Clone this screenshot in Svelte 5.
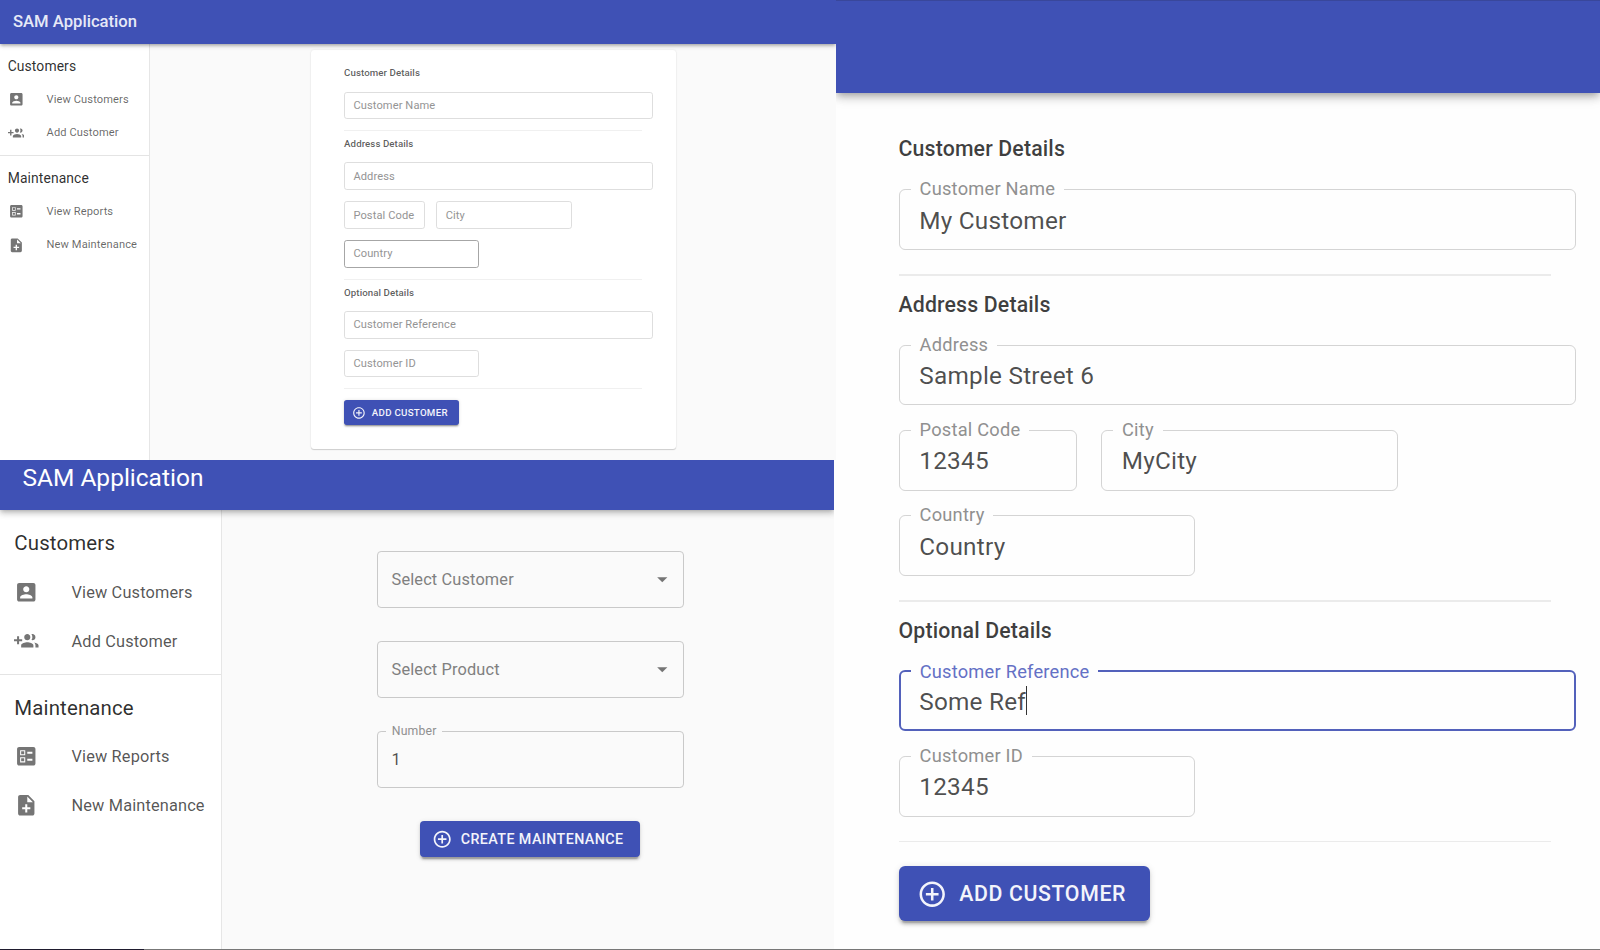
<script>
  const icons = {
    account: 'M3 5v14c0 1.1.89 2 2 2h14c1.1 0 2-.9 2-2V5c0-1.1-.9-2-2-2H5c-1.11 0-2 .9-2 2zm12 4c0 1.66-1.34 3-3 3s-3-1.34-3-3 1.34-3 3-3 3 1.34 3 3zm-9 8c0-2 4-3.1 6-3.1s6 1.1 6 3.1v1H6v-1z',
    groupAdd: 'M8 10H5V7H3v3H0v2h3v3h2v-3h3v-2zm10 1c1.66 0 2.99-1.34 2.99-3S19.66 5 18 5c-.32 0-.63.05-.91.14.57.81.9 1.79.9 2.86s-.34 2.04-.9 2.86c.28.09.59.14.91.14zm-5 0c1.66 0 2.99-1.34 2.99-3S14.66 5 13 5c-1.66 0-3 1.34-3 3s1.34 3 3 3zm6.62 2.16c.83.73 1.38 1.66 1.38 2.84v2h3v-2c0-1.54-2.37-2.49-4.38-2.84zM13 13c-2 0-6 1-6 3v2h12v-2c0-2-4-3-6-3z',
    ballot: 'M13 9.5h5v-2h-5v2zm0 7h5v-2h-5v2zm6 4.5H5c-1.1 0-2-.9-2-2V5c0-1.1.9-2 2-2h14c1.1 0 2 .9 2 2v14c0 1.1-.9 2-2 2zM6 11h5V6H6v5zm1-4h3v3H7V7zM6 18h5v-5H6v5zm1-4h3v3H7v-3z',
    noteAdd: 'M14 2H6c-1.1 0-1.99.9-1.99 2L4 20c0 1.1.89 2 1.99 2H18c1.1 0 2-.9 2-2V8l-6-6zm2 14h-3v3h-2v-3H8v-2h3v-3h2v3h3v2zm-3-7V3.5L18.5 9H13z',
    addCircle: 'M13 7h-2v4H7v2h4v4h2v-4h4v-2h-4V7zm-1-5C6.48 2 2 6.48 2 12s4.48 10 10 10 10-4.48 10-10S17.52 2 12 2zm0 18c-4.41 0-8-3.59-8-8s3.59-8 8-8 8 3.59 8 8-3.59 8-8 8z',
    arrow: 'M7 10l5 5 5-5z'
  };

  const menu = [
    { title: 'Customers', items: [['account', 'View Customers'], ['groupAdd', 'Add Customer']] },
    { title: 'Maintenance', items: [['ballot', 'View Reports'], ['noteAdd', 'New Maintenance']] }
  ];

  const sections = [
    { title: 'Customer Details', rows: [[['name', 'Customer Name', 'full']]] },
    {
      title: 'Address Details',
      rows: [
        [['address', 'Address', 'full']],
        [['postal', 'Postal Code', 'short'], ['city', 'City', 'half']],
        [['country', 'Country', 'half']]
      ]
    },
    {
      title: 'Optional Details',
      rows: [[['reference', 'Customer Reference', 'full']], [['id', 'Customer ID', 'half']]]
    }
  ];

  const filled = {
    name: 'My Customer',
    address: 'Sample Street 6',
    postal: '12345',
    city: 'MyCity',
    country: 'Country',
    reference: 'Some Ref',
    id: '12345'
  };
</script>

{#snippet icon(name)}
  <svg class="icon" viewBox="0 0 24 24" aria-hidden="true"><path d={icons[name]} /></svg>
{/snippet}

{#snippet sidebar()}
  <nav class="sidebar">
    {#each menu as group}
      <div class="group">
        <h2>{group.title}</h2>
        {#each group.items as [glyph, label]}
          <div class="item">{@render icon(glyph)}<span>{label}</span></div>
        {/each}
      </div>
    {/each}
  </nav>
{/snippet}

{#snippet customerForm(values, active, hovered)}
  <div class="form">
    {#each sections as section}
      <h3>{section.title}</h3>
      <div class="rows">
        {#each section.rows as row}
          <div class="row">
            {#each row as [key, label, size]}
              <div class="field {size}" class:focused={key === active} class:hovered={key === hovered}>
                {#if values[key]}
                  <span class="label">{label}</span>
                  <span class="value">{values[key]}</span>
                  {#if key === active}<i class="caret"></i>{/if}
                {:else}
                  <span class="placeholder">{label}</span>
                {/if}
              </div>
            {/each}
          </div>
        {/each}
      </div>
      <div class="divider"></div>
    {/each}
    <button>{@render icon('addCircle')}<span>ADD CUSTOMER</span></button>
  </div>
{/snippet}

<div class="board">
  <div class="left">
    <section class="app overview">
      <header><h1>SAM Application</h1></header>
      <div class="body">
        {@render sidebar()}
        <main>
          <div class="card">{@render customerForm({}, '', 'country')}</div>
        </main>
      </div>
    </section>

    <section class="app maintenance">
      <header><h1>SAM Application</h1></header>
      <div class="body">
        {@render sidebar()}
        <main>
          <div class="field select"><span class="placeholder">Select Customer</span>{@render icon('arrow')}</div>
          <div class="field select"><span class="placeholder">Select Product</span>{@render icon('arrow')}</div>
          <div class="field"><span class="label">Number</span><span class="value">1</span></div>
          <button>{@render icon('addCircle')}<span>CREATE MAINTENANCE</span></button>
        </main>
      </div>
    </section>
  </div>

  <section class="app detail">
    <header></header>
    <main>{@render customerForm(filled, 'reference', '')}</main>
  </section>
  <div class="edge"></div>
</div>

<style>
  :global(body) {
    margin: 0;
    background: #fff;
  }

  .board {
    position: relative;
    display: flex;
    width: 1600px;
    height: 950px;
    overflow: hidden;
    background: #fefefe;
    font-family: Roboto, 'Liberation Sans', sans-serif;
    color: rgba(0, 0, 0, 0.83);
  }
  .board :global(*) {
    box-sizing: border-box;
  }
  .edge {
    position: absolute;
    left: 0;
    right: 0;
    bottom: 0;
    height: 1px;
    background: linear-gradient(90deg, #1f1b2e 144px, #777 144px);
  }

  .left {
    display: flex;
    flex-direction: column;
    width: 836px;
    flex: none;
  }
  .app {
    display: flex;
    flex-direction: column;
    overflow: hidden;
  }
  .overview {
    --u: 0.694px;
    --cut: 2.9;
    --surface: #fff;
    height: 460px;
    flex: none;
  }
  .maintenance {
    --u: 1.0215px;
    --cut: 0;
    --surface: #fafafa;
    width: 834px;
    flex: 1;
  }
  .detail {
    --u: 1.522px;
    --surface: #fefefe;
    flex: 1;
    background: #fefefe;
  }

  header {
    position: relative;
    z-index: 1;
    display: flex;
    align-items: center;
    flex: none;
    background: #3f51b5;
    color: #fff;
    box-shadow:
      0 calc(2 * var(--u)) calc(4 * var(--u)) calc(-1 * var(--u)) rgba(0, 0, 0, 0.2),
      0 calc(4 * var(--u)) calc(5 * var(--u)) rgba(0, 0, 0, 0.14),
      0 calc(1 * var(--u)) calc(10 * var(--u)) rgba(0, 0, 0, 0.12);
  }
  .overview header {
    height: 43.5px;
    padding-left: 13px;
  }
  .maintenance header {
    height: 50.4px;
    padding: 0 0 14px 22.4px;
  }
  .detail header {
    height: 92.7px;
    border-top: 1px solid #39479b;
  }
  h1 {
    margin: 0;
    font-size: calc(24 * var(--u));
    font-weight: 400;
    line-height: 1.33;
  }
  .overview h1 {
    font-weight: 500;
    color: #e6e9f7;
  }

  .body {
    display: flex;
    flex: 1;
    min-height: 0;
    background: #fafafa;
  }
  .sidebar {
    flex: none;
    background: #fff;
    border-right: 1px solid #e6e6e6;
  }
  .overview .sidebar {
    width: 149.5px;
    padding-top: 0.7px;
  }
  .maintenance .sidebar {
    width: 222px;
  }
  .group {
    padding: calc(8 * var(--u)) 0;
  }
  .group + .group {
    border-top: 1px solid #e4e4e4;
  }
  h2 {
    display: flex;
    align-items: center;
    height: calc(48 * var(--u));
    margin: 0;
    padding-left: calc((14 - var(--cut)) * var(--u));
    font-size: calc(20 * var(--u));
    font-weight: 400;
    letter-spacing: 0.0075em;
  }
  .item {
    display: flex;
    align-items: center;
    gap: calc(32 * var(--u));
    height: calc(48 * var(--u));
    padding-left: calc((14 - var(--cut)) * var(--u));
    font-size: calc(16 * var(--u));
    letter-spacing: 0.00938em;
    color: rgba(0, 0, 0, 0.68);
    white-space: nowrap;
  }
  .overview .item {
    color: rgba(0, 0, 0, 0.6);
  }
  .icon {
    flex: none;
    width: calc(24 * var(--u));
    height: calc(24 * var(--u));
    fill: #757575;
  }

  main {
    display: flex;
    flex-direction: column;
    flex: 1;
  }
  .overview main {
    padding: 6.5px 0 0 161.3px;
  }
  .card {
    width: 364.8px;
    height: 398.5px;
    padding: 14.5px 0 0 33.3px;
    border-radius: 3px;
    background: #fff;
    box-shadow:
      0 1px 1px rgba(0, 0, 0, 0.16),
      0 0 2px rgba(0, 0, 0, 0.1);
  }
  .detail main {
    padding: 37px 0 0 62.5px;
  }
  .maintenance main {
    padding: 40.6px 0 0 155.3px;
    gap: calc(32 * var(--u));
  }

  h3 {
    display: flex;
    align-items: center;
    height: calc(24 * var(--u));
    margin: 0 0 calc(15 * var(--u));
    font-size: calc(14 * var(--u));
    font-weight: 500;
    letter-spacing: 0.00714em;
    color: rgba(0, 0, 0, 0.76);
  }
  .detail h3 {
    padding-top: 1.6px;
  }
  .overview h3 {
    color: rgba(0, 0, 0, 0.65);
  }
  .rows {
    display: flex;
    flex-direction: column;
    gap: calc(16 * var(--u));
  }
  .row {
    display: flex;
    gap: calc(16 * var(--u));
  }
  .divider {
    width: calc(429 * var(--u));
    height: calc(1 * var(--u));
    min-height: 1px;
    margin: calc(16 * var(--u)) 0 calc(6.2 * var(--u));
    background: #ebebeb;
  }
  .overview .divider {
    margin: calc(15.8 * var(--u)) 0 calc(5.8 * var(--u));
    background: #f0f0f0;
  }
  .board .divider:nth-last-child(2) {
    margin-bottom: calc(15.8 * var(--u));
  }

  .field {
    position: relative;
    display: flex;
    align-items: center;
    height: calc(40 * var(--u));
    padding-left: calc(13 * var(--u));
    border: max(1px, calc(1 * var(--u))) solid #d4d4d4;
    border-radius: calc(4 * var(--u));
    font-size: calc(16 * var(--u));
    letter-spacing: 0.00938em;
    white-space: nowrap;
  }
  .full {
    width: calc(445 * var(--u));
  }
  .half {
    width: calc(195 * var(--u));
  }
  .short {
    width: calc(117 * var(--u));
  }
  .maintenance .field {
    width: calc(300 * var(--u));
    height: calc(56 * var(--u));
    border-color: #c9c9c9;
  }
  .select {
    justify-content: space-between;
    padding-right: calc(8.2 * var(--u));
  }
  .overview .field {
    padding-left: 8.3px;
    border-color: #dedede;
  }
  .overview .full {
    width: 309.4px;
  }
  .overview .hovered {
    border-color: #a6a6a6;
  }
  .focused {
    padding-left: calc(12.3 * var(--u));
    border: 2px solid #5361bb;
  }
  .label {
    position: absolute;
    top: calc(-9.7 * var(--u));
    left: calc(7.4 * var(--u));
    padding: 0 calc(5.8 * var(--u));
    font-size: calc(12 * var(--u));
    line-height: calc(18 * var(--u));
    background: var(--surface);
    color: #909090;
  }
  .focused .label {
    left: calc(6.8 * var(--u));
    color: #6470c5;
  }
  .value {
    color: rgba(0, 0, 0, 0.7);
  }
  .detail .value {
    padding-top: 1.4px;
  }
  .placeholder {
    color: #808080;
  }
  .overview .placeholder {
    color: #949494;
  }
  .caret {
    width: 1px;
    height: 29px;
    background: #333;
  }

  button {
    display: flex;
    align-items: center;
    align-self: flex-start;
    gap: calc(8 * var(--u));
    height: calc(36 * var(--u));
    padding: 0 calc(16 * var(--u)) 0 calc(12 * var(--u));
    border: 0;
    border-radius: calc(4 * var(--u));
    background: #3f51b5;
    color: #f3f4fb;
    font-family: inherit;
    font-size: calc(14 * var(--u));
    font-weight: 500;
    letter-spacing: 0.02857em;
    white-space: nowrap;
    box-shadow:
      0 calc(3 * var(--u)) calc(1 * var(--u)) calc(-2 * var(--u)) rgba(0, 0, 0, 0.2),
      0 calc(2 * var(--u)) calc(2 * var(--u)) rgba(0, 0, 0, 0.14),
      0 calc(1 * var(--u)) calc(5 * var(--u)) rgba(0, 0, 0, 0.12);
  }
  .maintenance button {
    margin-left: 42.5px;
  }
  button .icon {
    width: calc(20 * var(--u));
    height: calc(20 * var(--u));
    fill: #f3f4fb;
  }
</style>
